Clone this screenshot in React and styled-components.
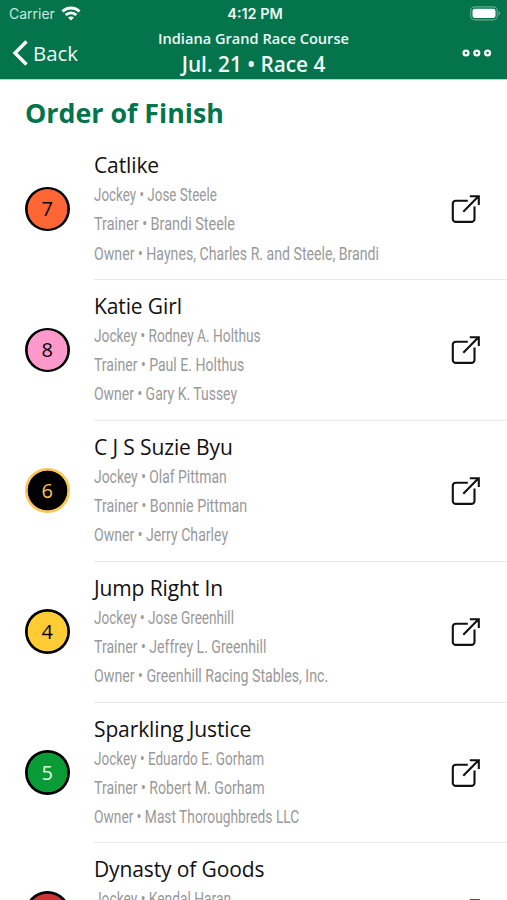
import React from "react"
import styled, { createGlobalStyle } from "styled-components"

const GlobalStyle = createGlobalStyle`
  * {
    box-sizing: border-box;
  }
  body {
    margin: 0;
    height: 900px;
    overflow: hidden;
    background: #fff;
    font-family: "Open Sans", "Noto Sans", sans-serif;
  }
`

const Screen = styled.div`
  width: 507px;
  height: 900px;
  overflow: hidden;
  background: #fff;
`

const Header = styled.header`
  height: 80px;
  border-bottom: 1px solid #b4d6c8;
  background: #04744c;
  color: #effaf5;
`

const StatusBar = styled.div`
  display: grid;
  grid-template-columns: 1fr auto 1fr;
  align-items: center;
  height: 27px;
  padding: 0 6px 0 9px;
  font-family: Inter, sans-serif;
  font-size: 14px;
`

const Carrier = styled.div`
  display: flex;
  align-items: center;
  gap: 6px;
  color: #cfe6dc;
`

const Clock = styled.div`
  font-weight: 600;
  font-size: 14.4px;
`

const BatteryIcon = styled.svg`
  justify-self: end;
`

const NavBar = styled.nav`
  display: grid;
  grid-template-columns: 1fr auto 1fr;
  align-items: center;
  height: 50px;
  padding: 0 15px 0 12px;
`

const BackButton = styled.button`
  display: flex;
  align-items: center;
  gap: 4px;
  padding: 0;
  border: none;
  background: none;
  color: inherit;
  font: 20.4px "Open Sans", sans-serif;
`

const Titles = styled.div`
  padding-left: 3px;
  text-align: center;
  font-weight: 600;
  white-space: nowrap;
`

const Track = styled.div`
  font-size: 14.6px;
  line-height: 22px;
`

const RaceName = styled.div`
  font-size: 20.8px;
  line-height: 30px;
`

const MoreIcon = styled.svg`
  justify-self: end;
`

const Heading = styled.h1`
  margin: 0;
  height: 59px;
  padding: 13px 0 0 25px;
  color: #04744c;
  font-size: 26.8px;
  line-height: 40px;
  font-weight: 700;
`

const Row = styled.div`
  display: flex;
  align-items: center;
  height: 140.9px;
  padding-left: 25px;
`

const Saddle = styled.div`
  flex: none;
  display: flex;
  align-items: center;
  justify-content: center;
  width: 44.5px;
  height: 44.5px;
  margin: 0 24.5px 1px 0;
  border-radius: 50%;
  background: radial-gradient(
    circle,
    ${props => props.$fill} 19.4px,
    ${props => props.$ink} 20.2px
  );
  color: ${props => props.$ink};
  font-size: 20px;
  line-height: 1;
`

const SaddleNumber = styled.span`
  color: ${props => props.$color || "inherit"};
`

const Entry = styled.div`
  flex: 1;
  display: flex;
  align-items: center;
  justify-content: space-between;
  min-width: 0;
  height: 100%;
  padding-right: 27px;
  border-bottom: 1px solid #e9e9e9;
`

const Details = styled.div`
  flex: 1;
  min-width: 0;
  height: 100%;
  padding-top: 11px;
`

const HorseName = styled.div`
  color: #111;
  font-size: 21px;
  line-height: 31px;
  letter-spacing: -0.12px;
  white-space: nowrap;
`

// Roboto squeezed to a condensed width
const Person = styled.div`
  height: 29.3px;
  color: #999;
  font: 18.5px/29.3px Roboto, sans-serif;
  white-space: nowrap;
  transform: scaleX(${props => props.$squeeze});
  transform-origin: left;
`

const LinkIcon = styled.svg`
  flex: none;
`

const finishers = [
  {
    number: 7,
    fill: "#ff6633",
    name: "Catlike",
    people: [
      ["Jockey", "Jose Steele", 0.726],
      ["Trainer", "Brandi Steele", 0.78],
      ["Owner", "Haynes, Charles R. and Steele, Brandi", 0.764],
    ],
  },
  {
    number: 8,
    fill: "#ff99cc",
    name: "Katie Girl",
    people: [
      ["Jockey", "Rodney A. Holthus", 0.741],
      ["Trainer", "Paul E. Holthus", 0.76],
      ["Owner", "Gary K. Tussey", 0.755],
    ],
  },
  {
    number: 6,
    fill: "#000",
    ink: "#ffc452",
    name: "C J S Suzie Byu",
    people: [
      ["Jockey", "Olaf Pittman", 0.752],
      ["Trainer", "Bonnie Pittman", 0.77],
      ["Owner", "Jerry Charley", 0.762],
    ],
  },
  {
    number: 4,
    fill: "#ffcc33",
    name: "Jump Right In",
    people: [
      ["Jockey", "Jose Greenhill", 0.735],
      ["Trainer", "Jeffrey L. Greenhill", 0.762],
      ["Owner", "Greenhill Racing Stables, Inc.", 0.767],
    ],
  },
  {
    number: 5,
    fill: "#089b36",
    numberColor: "#e4f8e8",
    name: "Sparkling Justice",
    people: [
      ["Jockey", "Eduardo E. Gorham", 0.733],
      ["Trainer", "Robert M. Gorham", 0.763],
      ["Owner", "Mast Thoroughbreds LLC", 0.744],
    ],
  },
  {
    fill: "#cc3333",
    name: "Dynasty of Goods",
    people: [["Jockey", "Kendal Haran", 0.745]],
  },
]

const WifiIcon = () =>
  <svg width="20" height="15" viewBox="0 0 20 15" fill="none" stroke="#fff" strokeWidth="2.9">
    <path d="M1.5 5.6C6.2.8 13.8.8 18.5 5.6M4.7 9c3-2.9 7.6-2.9 10.6 0" />
    <path d="M10 14.5l-3-3c1.7-1.5 4.3-1.5 6 0z" fill="#fff" stroke="none" />
  </svg>

const Battery = () =>
  <BatteryIcon width="31" height="15" viewBox="0 0 31 15">
    <rect x=".7" y=".9" width="26.6" height="13" rx="4" fill="none" stroke="#6aa98e" strokeWidth="1.1" />
    <rect x="2.5" y="2.7" width="23" height="9.4" rx="2.3" fill="#fff" />
    <path d="M28.6 5.3c2.2.8 2.2 3.4 0 4.2z" fill="#6aa98e" />
  </BatteryIcon>

const OpenIcon = () =>
  <LinkIcon width="30" height="30" viewBox="0 0 30 30" fill="none" stroke="#111" strokeWidth="2.1">
    <path d="M17.8 6.7H5.8a3 3 0 0 0-3 3v15.2a3 3 0 0 0 3 3h15.7a3 3 0 0 0 3-3V12.5" />
    <path d="M13.3 17.7L28 2.8M19.8 2.2h9v8.8" />
  </LinkIcon>

const App = () =>
  <Screen>
    <GlobalStyle />
    <Header>
      <StatusBar>
        <Carrier>
          Carrier
          <WifiIcon />
        </Carrier>
        <Clock>4:12 PM</Clock>
        <Battery />
      </StatusBar>
      <NavBar>
        <BackButton>
          <svg width="17" height="26" viewBox="0 0 17 26" fill="none" stroke="#fff" strokeWidth="3.4">
            <path d="M14.5 1.5L3 13l11.5 11.5" />
          </svg>
          Back
        </BackButton>
        <Titles>
          <Track>Indiana Grand Race Course</Track>
          <RaceName>Jul. 21 • Race 4</RaceName>
        </Titles>
        <MoreIcon width="30" height="8" viewBox="0 0 30 8" fill="none" stroke="#fff" strokeWidth="2.3">
          <circle cx="4" cy="4" r="2.4" />
          <circle cx="14.8" cy="4" r="2.4" />
          <circle cx="25.6" cy="4" r="2.4" />
        </MoreIcon>
      </NavBar>
    </Header>
    <Heading>Order of Finish</Heading>
    {finishers.map(horse =>
      <Row key={horse.name}>
        <Saddle $fill={horse.fill} $ink={horse.ink || "#000"}>
          <SaddleNumber $color={horse.numberColor}>{horse.number}</SaddleNumber>
        </Saddle>
        <Entry>
          <Details>
            <HorseName>{horse.name}</HorseName>
            {horse.people.map(([role, person, squeeze]) =>
              <Person key={role} $squeeze={squeeze}>
                {role} • {person}
              </Person>
            )}
          </Details>
          <OpenIcon />
        </Entry>
      </Row>
    )}
  </Screen>

export default App
